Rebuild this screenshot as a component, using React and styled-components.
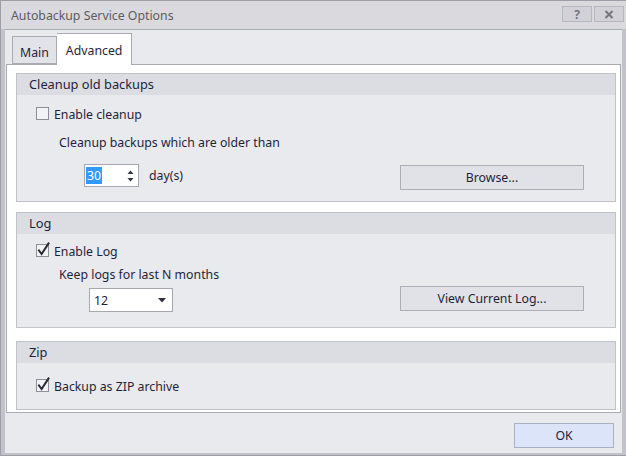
import styled, { createGlobalStyle } from 'styled-components';

const GlobalStyle = createGlobalStyle`
    html, body {
        margin: 0;
        padding: 0;
        background: #FFFFFF;
    }
    body {
        font-family: "Noto Sans", "Open Sans", sans-serif;
        font-size: 12.3px;
        color: #1f1f3a;
    }
`;

function CheckBox({ checked }) {
    return (
        <CheckIcon width="15" height="15" viewBox="0 0 15 15">
            <rect x="0.5" y="2.5" width="12" height="12" fill="#f3f3f5" stroke="#8d8e97" />
            {checked && (
                <path d="M3 8.5 L5.6 12 L12.5 1.5" fill="none" stroke="#2a2a36" strokeWidth="2" strokeLinecap="square" />
            )}
        </CheckIcon>
    );
}

function Group({ title, children, pad }) {
    return (
        <GroupBox>
            <GroupHeader>{title}</GroupHeader>
            <GroupBody $pad={pad}>{children}</GroupBody>
        </GroupBox>
    );
}

export default function App() {
    return (
        <>
            <GlobalStyle />
            <Window>
                <TitleBar>
                    <Title>Autobackup Service Options</Title>
                    <TitleButtons>
                        <TitleButton>?</TitleButton>
                        <TitleButton>
                            <svg width="10" height="9" viewBox="0 0 10 9">
                                <path d="M1.5 1 L8.5 8 M8.5 1 L1.5 8" stroke="#75757d" strokeWidth="2" />
                            </svg>
                        </TitleButton>
                    </TitleButtons>
                </TitleBar>
                <Body>
                    <Tabs>
                        <Tab>Main</Tab>
                        <Tab $active>Advanced</Tab>
                    </Tabs>
                    <Pane>
                        <Group title="Cleanup old backups" pad="11px 31px 11px 19px">
                            <CheckRow>
                                <CheckBox />
                                <span>Enable cleanup</span>
                            </CheckRow>
                            <Hint $top={13}>Cleanup backups which are older than</Hint>
                            <ControlRow $top={13}>
                                <SpinRow>
                                    <Spin>
                                        <Selected>30</Selected>
                                        <svg width="9" height="18" viewBox="0 0 9 18">
                                            <path d="M4.5 3.5 L7.5 7 L1.5 7 Z M4.5 14.5 L7.5 11 L1.5 11 Z" fill="#333340" />
                                        </svg>
                                    </Spin>
                                    <span>day(s)</span>
                                </SpinRow>
                                <Button $top={1}>Browse...</Button>
                            </ControlRow>
                        </Group>
                        <Group title="Log" pad="9px 31px 15px 19px">
                            <CheckRow>
                                <CheckBox checked />
                                <span>Enable Log</span>
                            </CheckRow>
                            <Hint $top={8}>Keep logs for last N months</Hint>
                            <ControlRow $top={3}>
                                <Combo>
                                    <span>12</span>
                                    <svg width="8" height="5" viewBox="0 0 8 5">
                                        <path d="M0 0 L8 0 L4 4.5 Z" fill="#333340" />
                                    </svg>
                                </Combo>
                                <Button>View Current Log...</Button>
                            </ControlRow>
                        </Group>
                        <Group title="Zip" pad="15px 31px 15px 19px">
                            <CheckRow>
                                <CheckBox checked />
                                <span>Backup as ZIP archive</span>
                            </CheckRow>
                        </Group>
                    </Pane>
                    <Footer>
                        <Button $primary>OK</Button>
                    </Footer>
                </Body>
            </Window>
        </>
    );
}

const Window = styled.div`
    width: 626px;
    height: 456px;
    box-sizing: border-box;
    display: flex;
    flex-direction: column;
    background: #c2c3ca;
    border: 1px solid #9d9ea6;
    border-right: none;
`;

const TitleBar = styled.div`
    height: 28px;
    display: flex;
    align-items: center;
    justify-content: space-between;
    background: #d9d9de;
    padding: 0 2px 0 10px;
`;

const Title = styled.div`
    color: #5c5c64;
    font-size: 12.3px;
`;

const TitleButtons = styled.div`
    display: flex;
    gap: 2px;
    margin-top: -2px;
`;

const TitleButton = styled.div`
    width: 28px;
    height: 14px;
    display: flex;
    align-items: center;
    justify-content: center;
    background: #d1d1d7;
    border: 1px solid #b7b7bf;
    color: #75757d;
    font-weight: bold;
    font-size: 12px;
`;

const Body = styled.div`
    flex: 1;
    margin: 0 4px 2px 4px;
    background: #e9eaee;
    border-top: 1px solid #a9aab2;
    display: flex;
    flex-direction: column;
    padding-top: 3px;
`;

const Tabs = styled.div`
    display: flex;
    align-items: flex-end;
    padding-left: 7px;
    height: 31px;
    position: relative;
    z-index: 1;
`;

const Tab = styled.div`
    box-sizing: border-box;
    height: ${p => (p.$active ? '32px' : '28px')};
    margin-bottom: ${p => (p.$active ? '-1px' : '0')};
    padding: 0 ${p => (p.$active ? '9px' : '7px')};
    display: flex;
    align-items: center;
    padding-top: ${p => (p.$active ? '2px' : '4px')};
    background: ${p => (p.$active ? '#FFFFFF' : '#e2e3e8')};
    border: 1px solid #a9aab2;
    border-bottom: ${p => (p.$active ? 'none' : '1px solid #a9aab2')};
    border-left: ${p => (p.$active ? 'none' : '1px solid #a9aab2')};
    color: #1f1f3a;
`;

const Pane = styled.div`
    height: 349px;
    box-sizing: border-box;
    margin: 0 1px;
    background: #FFFFFF;
    border: 1px solid #a9aab2;
    padding: 8px 4px 2px 9px;
    display: flex;
    flex-direction: column;
    gap: 10px;
    & > div:nth-child(3) {
        margin-top: 3px;
    }
`;

const GroupBox = styled.div`
    border: 1px solid #c1c2c9;
    background: #e9eaee;
`;

const GroupHeader = styled.div`
    height: 21px;
    line-height: 21px;
    padding-left: 12px;
    background: #dcdde2;
    font-size: 12.8px;
`;

const GroupBody = styled.div`
    display: flex;
    flex-direction: column;
    padding: ${p => p.$pad};
`;

const CheckRow = styled.div`
    display: flex;
    align-items: center;
    gap: 3px;
    height: 16px;
`;

const CheckIcon = styled.svg`
    margin-top: -3px;
`;

const Hint = styled.div`
    margin: ${p => p.$top}px 0 0 23px;
    line-height: 16px;
`;

const ControlRow = styled.div`
    display: flex;
    justify-content: space-between;
    align-items: flex-start;
    margin-top: ${p => p.$top}px;
`;

const SpinRow = styled.div`
    display: flex;
    align-items: center;
    gap: 10px;
    margin-left: 48px;
`;

const Spin = styled.div`
    box-sizing: border-box;
    width: 55px;
    height: 23px;
    background: #FFFFFF;
    border: 1px solid #a6a7b0;
    display: flex;
    align-items: center;
    justify-content: space-between;
    padding: 0 3px 0 1px;
`;

const Selected = styled.span`
    background: #3399ff;
    color: #FFFFFF;
    padding: 1px 1px;
    line-height: 15px;
`;

const Combo = styled.div`
    box-sizing: border-box;
    width: 84px;
    height: 24px;
    margin: 2px 0 0 53px;
    background: #FFFFFF;
    border: 1px solid #a6a7b0;
    display: flex;
    align-items: center;
    justify-content: space-between;
    padding: 0 6px 0 4px;
`;

const Button = styled.div`
    box-sizing: border-box;
    width: ${p => (p.$primary ? '100px' : '184px')};
    height: 25px;
    margin-top: ${p => p.$top || 0}px;
    display: flex;
    align-items: center;
    justify-content: center;
    background: ${p => (p.$primary ? '#dce4f9' : '#e1e2e7')};
    border: 1px solid ${p => (p.$primary ? '#a9b0c2' : '#adaeb6')};
    color: #1f1f3a;
`;

const Footer = styled.div`
    flex: 1;
    display: flex;
    justify-content: flex-end;
    align-items: flex-start;
    padding: 10px 8px 0 0;
`;
